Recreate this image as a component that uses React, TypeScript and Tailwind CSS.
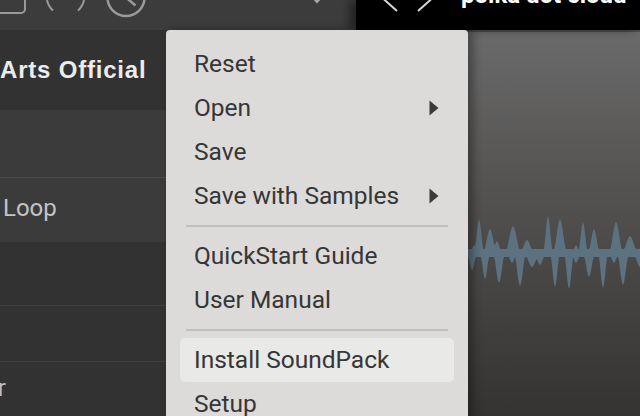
import React from 'react';

const upperSpikes: [number, number, number][] = [
  [474, 8, 4], [479, 34, 5], [490, 24, 7], [497, 12, 5], [513, 27, 8], [527, 13, 7],
  [548, 37, 5], [560, 34, 7], [576, 8, 4], [583, 31, 5], [594, 24, 6], [616, 31, 7], [630, 17, 8],
];
const lowerSpikes: [number, number, number][] = [
  [472, 17, 5], [485, 26, 5], [499, 30, 6], [512, 10, 5], [520, 33, 6], [532, 14, 8], [540, 12, 6],
  [555, 34, 5], [569, 36, 5], [576, 10, 5], [589, 24, 6], [603, 35, 5], [614, 10, 5], [623, 32, 6], [640, 14, 7],
];

function envelope(x: number, spikes: [number, number, number][]) {
  let h = 4;
  for (const [sx, sh, w] of spikes) {
    const t = Math.max(0, 1 - Math.abs(x - sx) / w);
    const v = sh * t * t * (3 - 2 * t);
    if (v > h) h = v;
  }
  return h;
}

function wavePath(offsetX: number, width: number, cy: number) {
  const top: string[] = [];
  const bottom: string[] = [];
  for (let x = 0; x <= width; x++) {
    top.push(`${x},${(cy - envelope(x + offsetX, upperSpikes)).toFixed(1)}`);
    bottom.unshift(`${x},${(cy + envelope(x + offsetX, lowerSpikes)).toFixed(1)}`);
  }
  return `M${top.join(' L')} L${bottom.join(' L')} Z`;
}

function Arrow() {
  return (
    <svg width="10" height="16" viewBox="0 0 10 16" className="shrink-0">
      <polygon points="0.5,0.5 9.5,8 0.5,15.5" fill="#3a3a3a" />
    </svg>
  );
}

function Item({ label, sub, active }: { label: string; sub?: boolean; active?: boolean }) {
  return (
    <div
      className={
        'mx-[14px] h-[44px] px-[14px] pr-[15px] flex items-center justify-between rounded-[5px] ' +
        (active ? 'bg-[#e9e9e8]' : '')
      }
    >
      <span>{label}</span>
      {sub && <Arrow />}
    </div>
  );
}

function Separator() {
  return (
    <div className="h-[16px] mx-[20px] flex items-center">
      <div className="h-[2px] w-full bg-[#bfbebc]" />
    </div>
  );
}

export default function App() {
  return (
    <div className="relative w-[640px] h-[416px] overflow-hidden bg-[#333333] font-['Roboto',_'Noto_Sans',_sans-serif]">
      {/* top bar */}
      <div className="flex h-[30px]">
        <div className="w-[356px] bg-[#3c3c3c] flex items-start">
          <svg width="30" height="30" viewBox="0 0 30 30">
            <rect x="-20" y="-20" width="45" height="33" rx="4" fill="none" stroke="#9a9a9a" strokeWidth="2" />
          </svg>
          <svg width="70" height="30" viewBox="30 0 70 30">
            <path d="M47,0 A19,19 0 0 0 53,10.5" fill="none" stroke="#9a9a9a" strokeWidth="2" />
            <path d="M78,10.5 A19,19 0 0 0 84,0" fill="none" stroke="#9a9a9a" strokeWidth="2" />
          </svg>
          <svg width="60" height="30" viewBox="100 0 60 30">
            <circle cx="126" cy="-2.5" r="18.5" fill="none" stroke="#9a9a9a" strokeWidth="2.5" />
            <line x1="126" y1="-2.5" x2="135.5" y2="5.5" stroke="#9a9a9a" strokeWidth="2.5" />
          </svg>
          <svg width="196" height="30" viewBox="160 0 196 30">
            <polygon points="311,-3 323,-3 317,3.5" fill="#a8a8a8" />
          </svg>
        </div>
        <div className="flex-1 bg-black flex items-start shadow-[-6px_0_10px_rgba(0,0,0,0.45)] z-10">
          <svg width="105" height="30" viewBox="356 0 105 30" className="shrink-0">
            <polyline points="396,-14 383,-1.5 397,11" fill="none" stroke="#d8d8d8" strokeWidth="2" />
            <polyline points="419,-14 432,-1.5 418,11" fill="none" stroke="#d8d8d8" strokeWidth="2" />
          </svg>
          <span className="-mt-[17px] text-[24px] leading-none font-bold text-white whitespace-nowrap">
            polka dot cloud
          </span>
        </div>
      </div>

      {/* body */}
      <div className="flex h-[386px]">
        <div className="w-[356px] flex flex-col">
          <div className="h-[80px] bg-[#323232] flex items-center">
            <span className="text-[24px] font-bold text-[#ececec] font-['Liberation_Sans',_sans-serif] tracking-[0.8px] whitespace-nowrap">
              Arts Official
            </span>
          </div>
          <div className="h-[68px] bg-[#3b3b3b] border-b border-[#4b4b4b]" />
          <div className="h-[64px] bg-[#3b3b3b] flex items-center pl-[3px] pb-[5px]">
            <span className="text-[24px] text-[#c4c4c4]">Loop</span>
          </div>
          <div className="h-[64px] bg-[#323232] border-b border-[#404040]" />
          <div className="h-[56px] bg-[#323232] border-b border-[#404040]" />
          <div className="flex-1 bg-[#323232] pt-[14px]">
            <span className="text-[24px] leading-none text-[#bdbdbd] -ml-[8px]">ir</span>
          </div>
        </div>
        <div className="flex-1 bg-gradient-to-b from-[#6b6a6a] to-[#343331] border-t-2 border-[#4e4e4e]">
          <svg width="284" height="384" viewBox="0 0 284 384">
            <path d={wavePath(356, 284, 221)} fill="#5c7280" />
          </svg>
        </div>
      </div>

      {/* context menu */}
      <div className="absolute left-[166px] top-[30px] w-[302px] h-[400px] bg-[#dcdbd9] rounded-t-[4px] pt-[12px] text-[24.5px] text-[#363636] shadow-[5px_0_10px_rgba(0,0,0,0.35)] z-20">
        <Item label="Reset" />
        <Item label="Open" sub />
        <Item label="Save" />
        <Item label="Save with Samples" sub />
        <Separator />
        <Item label="QuickStart Guide" />
        <Item label="User Manual" />
        <Separator />
        <Item label="Install SoundPack" active />
        <Item label="Setup" />
      </div>
    </div>
  );
}
